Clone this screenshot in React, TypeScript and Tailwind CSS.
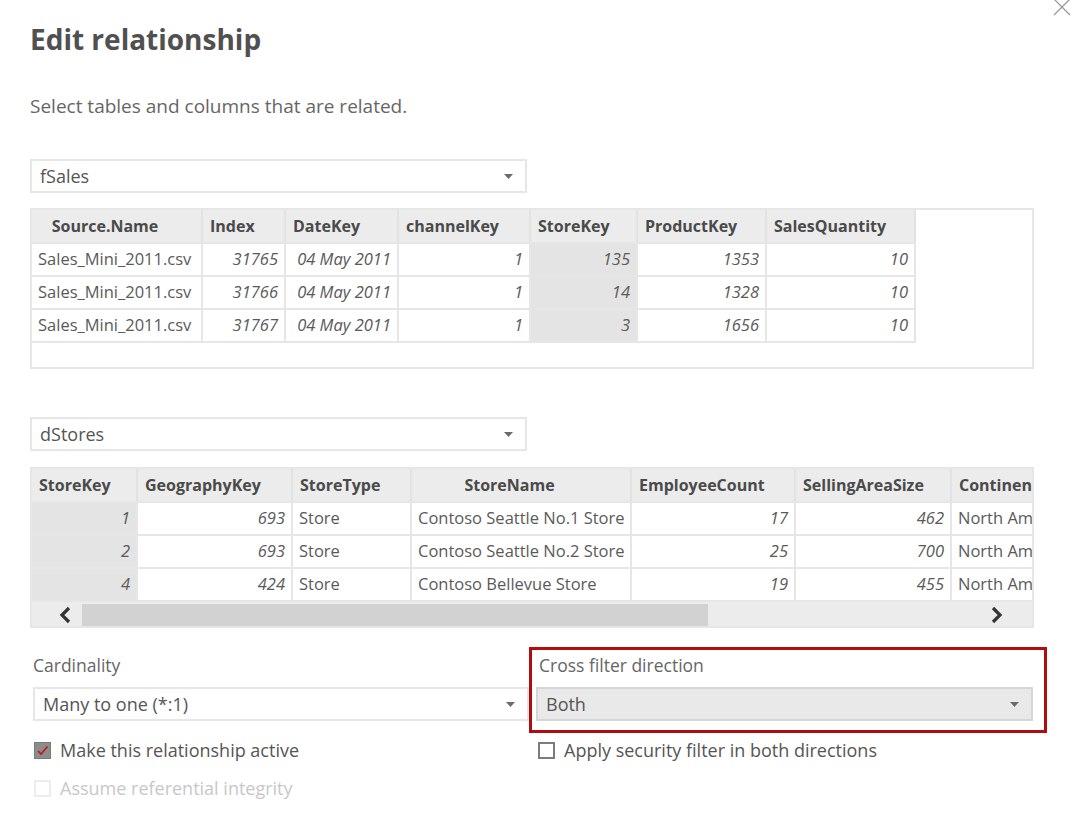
import React from "react"

const font = "font-['Open_Sans',sans-serif]"

type Col = { title: string; w: number; center?: boolean; key?: boolean }

const salesCols: Col[] = [
  { title: "Source.Name", w: 171, center: true },
  { title: "Index", w: 83 },
  { title: "DateKey", w: 113 },
  { title: "channelKey", w: 132 },
  { title: "StoreKey", w: 107, key: true },
  { title: "ProductKey", w: 129 },
  { title: "SalesQuantity", w: 149 },
]

// [text, numeric -> italic and right aligned]
const salesRows: [string, boolean][][] = [
  [["Sales_Mini_2011.csv", false], ["31765", true], ["04 May 2011", true], ["1", true], ["135", true], ["1353", true], ["10", true]],
  [["Sales_Mini_2011.csv", false], ["31766", true], ["04 May 2011", true], ["1", true], ["14", true], ["1328", true], ["10", true]],
  [["Sales_Mini_2011.csv", false], ["31767", true], ["04 May 2011", true], ["1", true], ["3", true], ["1656", true], ["10", true]],
]

const storeCols: Col[] = [
  { title: "StoreKey", w: 106, key: true },
  { title: "GeographyKey", w: 155 },
  { title: "StoreType", w: 119 },
  { title: "StoreName", w: 220, center: true },
  { title: "EmployeeCount", w: 164 },
  { title: "SellingAreaSize", w: 156 },
  { title: "ContinentName", w: 120 },
]

const storeRows: [string, boolean][][] = [
  [["1", true], ["693", true], ["Store", false], ["Contoso Seattle No.1 Store", false], ["17", true], ["462", true], ["North America", false]],
  [["2", true], ["693", true], ["Store", false], ["Contoso Seattle No.2 Store", false], ["25", true], ["700", true], ["North America", false]],
  [["4", true], ["424", true], ["Store", false], ["Contoso Bellevue Store", false], ["19", true], ["455", true], ["North America", false]],
]

function Arrow() {
  return (
    <svg width="9" height="5" viewBox="0 0 9 5" className="shrink-0">
      <path d="M0 0 L9 0 L4.5 5 Z" fill="#6b6b6b" />
    </svg>
  )
}

function Dropdown({ value, gray }: { value: string; gray?: boolean }) {
  return (
    <div
      className={`flex h-[34px] items-center justify-between border-2 pl-[8px] pr-[12px] text-[18px] text-[#555] ${
        gray ? "border-[#d6d6d6] bg-[#e9e9e9]" : "border-[#e6e6e6] bg-white"
      }`}
    >
      <span className="leading-none">{value}</span>
      <Arrow />
    </div>
  )
}

function DataTable({ cols, rows }: { cols: Col[]; rows: [string, boolean][][] }) {
  return (
    <div className="flex w-fit flex-col">
      <div className="flex h-[32px] bg-[#ececec]">
        {cols.map((c) => (
          <div
            key={c.title}
            style={{ width: c.w }}
            className={`flex shrink-0 items-center overflow-hidden whitespace-nowrap border-r-2 border-[#e2e2e2] text-[16px] font-bold text-[#4a4a4a] ${
              c.center ? "justify-center pl-[7px] pr-[30px]" : "px-[7px]"
            }`}
          >
            {c.title}
          </div>
        ))}
      </div>
      {rows.map((r, i) => (
        <div key={i} className="flex h-[33px]">
          {r.map(([t, num], j) => (
            <div
              key={j}
              style={{ width: cols[j].w }}
              className={`flex shrink-0 items-center overflow-hidden whitespace-nowrap border-r-2 border-t-2 border-[#e6e6e6] px-[6px] text-[16.5px] text-[#5a5a5a] ${
                num ? "justify-end italic" : ""
              } ${cols[j].key ? "bg-[#e4e4e4]" : "bg-white"}`}
            >
              {t}
            </div>
          ))}
        </div>
      ))}
    </div>
  )
}

function Checkbox({ checked, disabled }: { checked?: boolean; disabled?: boolean }) {
  if (checked) {
    return (
      <svg width="17" height="17" viewBox="0 0 17 17" className="shrink-0">
        <rect x="0.5" y="0.5" width="16" height="16" fill="#8c8c8c" stroke="#7a7a7a" />
        <path d="M4 9 L7 12 L13.5 4.5" fill="none" stroke="#c0141c" strokeWidth="1.6" />
      </svg>
    )
  }
  return (
    <div
      className={`h-[17px] w-[17px] shrink-0 border-2 ${
        disabled ? "border-[#ececec]" : "border-[#7c7c7c]"
      } bg-white`}
    />
  )
}

export default function App() {
  return (
    <div className={`relative h-[821px] w-[1076px] overflow-hidden bg-white ${font}`}>
      {/* close button */}
      <svg width="18" height="18" viewBox="0 0 18 18" className="absolute right-[5px] top-[-2px]">
        <path d="M1 1 L17 17 M17 1 L1 17" stroke="#9a9a9a" strokeWidth="1.3" />
      </svg>

      <div className="flex w-[1034px] flex-col pl-[30px] pt-[20px]">
        <h1 className="text-[28px] font-bold leading-[38px] text-[#505050]">Edit relationship</h1>
        <p className="mt-[35px] text-[19px] leading-[26px] text-[#666]">
          Select tables and columns that are related.
        </p>

        <div className="mt-[40px] w-[497px]">
          <Dropdown value="fSales" />
        </div>

        <div className="mt-[15px] h-[161px] overflow-hidden border-2 border-[#e6e6e6]">
          <DataTable cols={salesCols} rows={salesRows} />
          <div className="w-[884px] border-t-2 border-[#e6e6e6]" />
        </div>

        <div className="mt-[48px] w-[497px]">
          <Dropdown value="dStores" />
        </div>

        <div className="mt-[16px] flex h-[161px] flex-col overflow-hidden border-2 border-[#e6e6e6]">
          <DataTable cols={storeCols} rows={storeRows} />
          <div className="flex h-[28px] shrink-0 items-center border-t-2 border-[#e6e6e6] bg-[#ececec]">
            <div className="flex w-[50px] justify-end pr-[10px]">
              <svg width="14" height="18" viewBox="0 0 14 18">
                <path d="M11 2 L4 9 L11 16" fill="none" stroke="#333" strokeWidth="3.2" />
              </svg>
            </div>
            <div className="h-[22px] w-[626px] bg-[#d2d2d2]" />
            <div className="flex-1" />
            <div className="flex w-[70px] justify-center">
              <svg width="14" height="18" viewBox="0 0 14 18">
                <path d="M3 2 L10 9 L3 16" fill="none" stroke="#333" strokeWidth="3.2" />
              </svg>
            </div>
          </div>
        </div>

        <div className="mt-[19px] grid grid-cols-[499px_1fr] items-start">
          <div className="flex flex-col pl-[3px] pt-[6px]">
            <div className="text-[17.5px] leading-[24px] text-[#666]">Cardinality</div>
            <div className="mt-[10px]">
              <Dropdown value="Many to one (*:1)" />
            </div>
            <div className="mt-[17px] flex h-[24px] items-center gap-[9px] pl-[1px] text-[18px] text-[#555]">
              <Checkbox checked />
              <span>Make this relationship active</span>
            </div>
            <div className="mt-[14px] flex h-[24px] items-center gap-[9px] pl-[1px] text-[18px] text-[#c8c8c8]">
              <Checkbox disabled />
              <span>Assume referential integrity</span>
            </div>
          </div>

          <div className="flex flex-col">
            <div className="w-[518px] border-[3px] border-[#b00d10] px-[4px] pb-[9px] pt-[3px]">
              <div className="pl-[3px] text-[17.5px] leading-[24px] text-[#666]">Cross filter direction</div>
              <div className="mt-[10px] w-[497px]">
                <Dropdown value="Both" gray />
              </div>
            </div>
            <div className="mt-[5px] flex h-[24px] items-center gap-[9px] pl-[9px] text-[18px] text-[#555]">
              <Checkbox />
              <span>Apply security filter in both directions</span>
            </div>
          </div>
        </div>
      </div>
    </div>
  )
}
